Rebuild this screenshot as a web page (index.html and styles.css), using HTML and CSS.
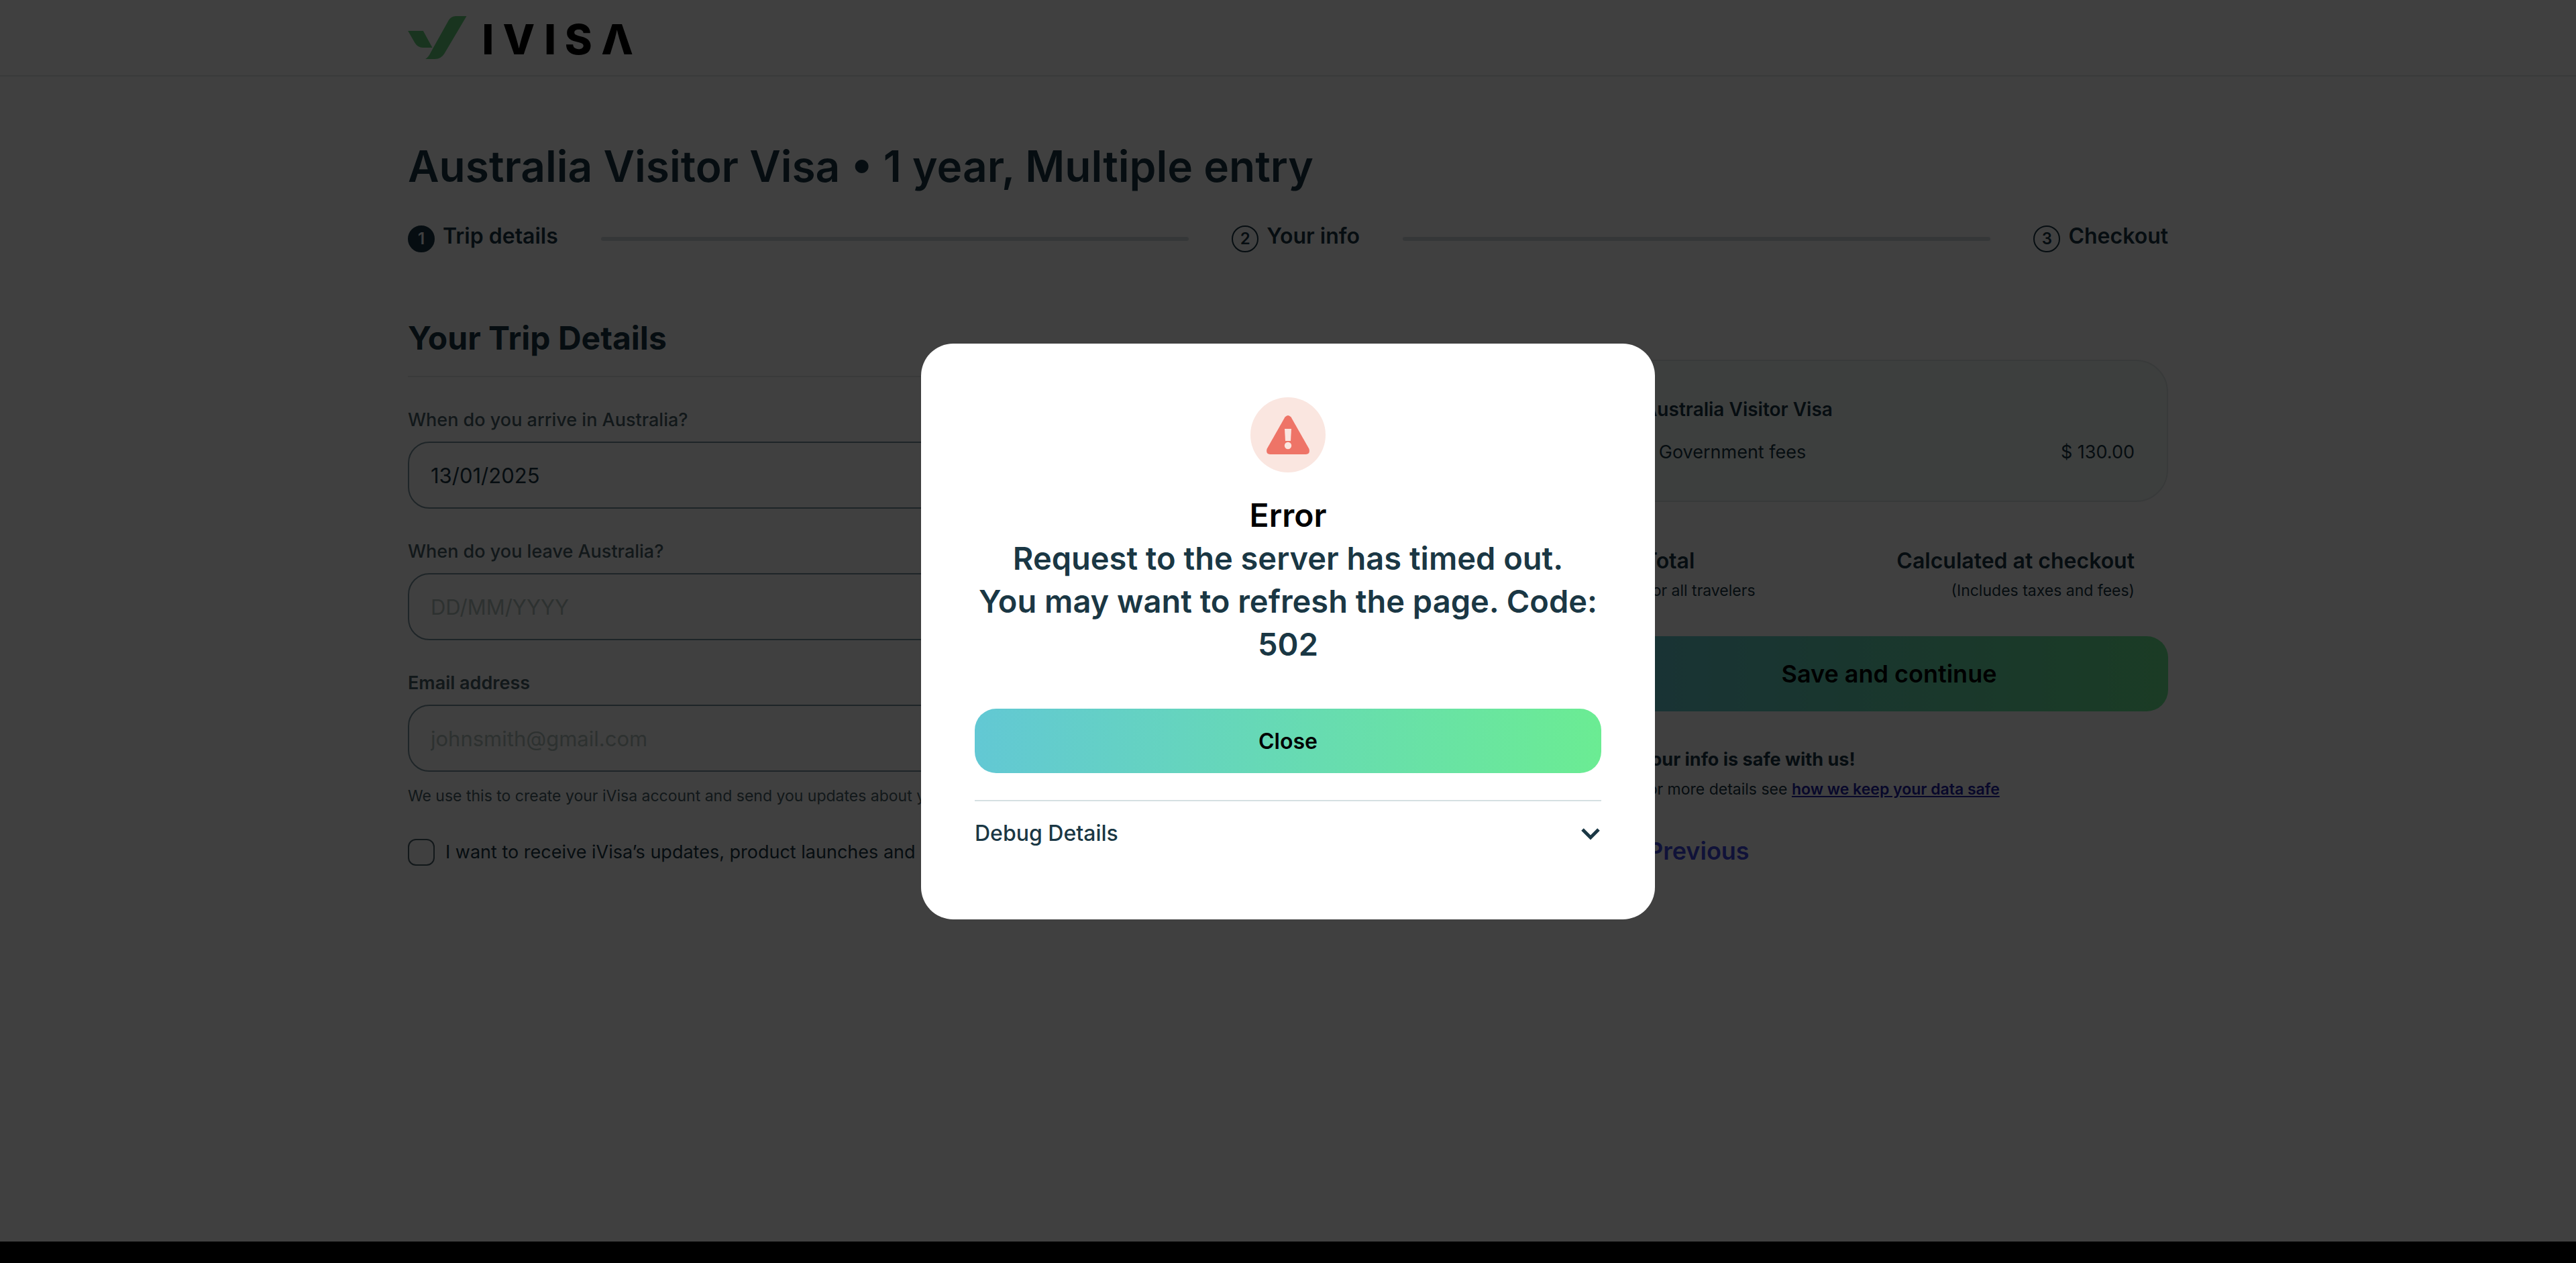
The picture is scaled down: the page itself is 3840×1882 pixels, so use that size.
FILE: index.html
```html
<!DOCTYPE html>
<html lang="en">
<head>
<meta charset="utf-8">
<meta name="viewport" content="width=device-width, initial-scale=1">
<title>Australia Visitor Visa</title>
<link rel="stylesheet" href="styles.css">
</head>
<body>
<div class="page">
  <header class="site-header">
    <div class="container">
      <a class="logo" href="#" aria-label="iVisa home">
        <svg class="logo-mark" viewBox="84 72 1016 192" aria-hidden="true">
          <path fill="#64d07c" d="M84 138H152L193 213H150Q128 213 115 192ZM346 72H298Q276 73 265 92L187 232Q176 256 162 264H204Q233 263 247 239Z"/>
          <text class="logo-word" y="242" x="415 508 693 785 948">IVISΛ</text>
        </svg>
      </a>
    </div>
  </header>

  <main class="container main">
    <h1 class="page-title">Australia Visitor Visa • 1 year, Multiple entry</h1>
    <ol class="steps">
      <li class="step"><span class="step-dot step-dot-active">1</span><span class="step-name">Trip details</span></li>
      <li class="step-line" aria-hidden="true"></li>
      <li class="step"><span class="step-dot">2</span><span class="step-name">Your info</span></li>
      <li class="step-line" aria-hidden="true"></li>
      <li class="step"><span class="step-dot">3</span><span class="step-name">Checkout</span></li>
    </ol>

    <form class="columns">
      <section class="trip">
        <h2 class="section-title">Your Trip Details</h2>
        <div class="field">
          <label class="label" for="arrival">When do you arrive in Australia?</label>
          <input class="input" id="arrival" type="text" value="13/01/2025" placeholder="DD/MM/YYYY">
        </div>
        <div class="field">
          <label class="label" for="departure">When do you leave Australia?</label>
          <input class="input" id="departure" type="text" placeholder="DD/MM/YYYY">
        </div>
        <div class="field">
          <label class="label label-strong" for="email">Email address</label>
          <input class="input" id="email" type="email" placeholder="johnsmith@gmail.com">
        </div>
        <p class="hint">We use this to create your iVisa account and send you updates about your application.</p>
        <label class="consent"><input class="checkbox" type="checkbox">I want to receive iVisa’s updates, product launches and personalized offers.</label>
      </section>

      <aside class="summary">
        <div class="card">
          <p class="card-title">Australia Visitor Visa</p>
          <div class="card-row"><span>• Government fees</span><span>$ 130.00</span></div>
        </div>
        <div class="totals">
          <div><p class="total">Total</p><p class="small">For all travelers</p></div>
          <div class="totals-end"><p class="total">Calculated at checkout</p><p class="small">(Includes taxes and fees)</p></div>
        </div>
        <button class="button button-save" type="button">Save and continue</button>
        <div class="safe">
          <p class="safe-title">Your info is safe with us!</p>
          <p class="small">For more details see <a class="link" href="#">how we keep your data safe</a></p>
        </div>
        <button class="previous" type="button">Previous</button>
      </aside>
    </form>
  </main>
  <footer class="site-footer"></footer>
</div>

<div class="overlay">
  <div class="modal" role="alertdialog" aria-modal="true" aria-labelledby="error-title" aria-describedby="error-text">
    <svg class="alert-icon" viewBox="0 0 112 112" aria-hidden="true">
      <circle cx="56" cy="56" r="56" fill="#fae6e0"/>
      <path fill="#ee7467" d="M51.500 29.500Q56 24.500 60.500 29.500L87.500 77Q89.500 84 83 85H29Q22.500 84 24.500 77Z"/>
      <path fill="#fae6e0" d="M51 47H61L60 65H52Z"/>
      <circle cx="56" cy="72" r="5.200" fill="#fae6e0"/>
    </svg>
    <h2 class="modal-title" id="error-title">Error</h2>
    <p class="modal-text" id="error-text">Request to the server has timed out.<br>You may want to refresh the page. Code: 502</p>
    <button class="button button-close" type="button">Close</button>
    <button class="debug" type="button" aria-expanded="false">Debug Details
      <svg class="chevron" viewBox="0 0 32 32" aria-hidden="true"><path d="M4 10L16 22L28 10" fill="none" stroke="#1a3744" stroke-width="5"/></svg>
    </button>
  </div>
</div>
</body>
</html>
```
FILE: styles.css
```css
* {
  box-sizing: border-box;
}

body,
h1,
h2,
p,
ol {
  margin: 0;
  padding: 0;
}

body,
button,
input {
  font-family: Inter, "Liberation Sans", sans-serif;
}

body {
  background: #fff;
  color: #1a3744;
  font-size: 28px;
  line-height: 40px;
}

button {
  border: 0;
  cursor: pointer;
}

.page {
  display: flex;
  flex-direction: column;
  min-height: 100vh;
}

.container {
  width: 100%;
  max-width: 2688px;
  margin: 0 auto;
  padding: 0 32px;
}

.site-header {
  border-bottom: 2px solid #e4e8e8;
}

.logo {
  display: flex;
  align-items: center;
  height: 112px;
}

.logo-mark {
  width: 339px;
  height: 64px;
  overflow: visible;
}

.logo-word {
  font-size: 186px;
  font-weight: 800;
  fill: #000;
}

.main {
  flex: 1;
  padding-top: 94px;
  padding-bottom: 96px;
}

.page-title {
  font-size: 64px;
  font-weight: 600;
  line-height: 80px;
}

.steps {
  display: flex;
  align-items: center;
  gap: 64px;
  margin-top: 48px;
  list-style: none;
}

.step {
  display: flex;
  gap: 12px;
  font-size: 32px;
  font-weight: 600;
}

.step-dot {
  width: 40px;
  height: 40px;
  border: 2px solid #1a3744;
  border-radius: 50%;
  font-size: 24px;
  line-height: 36px;
  text-align: center;
}

.step-dot-active {
  background: #1a3744;
  color: #fff;
}

.step-name {
  line-height: 32px;
}

.step-line {
  flex: 1;
  height: 6px;
  border-radius: 3px;
  background: #d3dade;
}

.columns {
  display: grid;
  grid-template-columns: 2fr 1fr;
  gap: 128px;
  margin-top: 96px;
}

.section-title {
  padding-bottom: 24px;
  border-bottom: 2px solid #e4e8e8;
  font-size: 48px;
  font-weight: 700;
  line-height: 64px;
}

.field {
  margin-top: 44px;
}

.label {
  display: block;
  margin-bottom: 12px;
  color: #4a5f6a;
  font-size: 27px;
  font-weight: 500;
}

.label-strong {
  font-weight: 600;
}

.input {
  display: block;
  width: 100%;
  height: 100px;
  padding: 0 32px;
  border: 2px solid #7a939e;
  border-radius: 32px;
  background: #fff;
  color: #1a3744;
  font-size: 31px;
}

.input::placeholder {
  color: #b2c2be;
  opacity: 1;
}

.hint {
  margin-top: 16px;
  color: #4a5f6a;
  font-size: 23px;
}

.consent {
  display: flex;
  align-items: center;
  gap: 16px;
  margin-top: 44px;
  font-size: 27px;
}

.checkbox {
  width: 40px;
  height: 40px;
  margin: 0;
  border: 2px solid #4a5f6a;
  border-radius: 12px;
  appearance: none;
}

.summary {
  padding-top: 64px;
}

.card {
  padding: 52px 48px;
  border: 2px solid #dfe6e6;
  border-radius: 48px;
  background: #f3f9f7;
}

.card-title {
  font-size: 28px;
  font-weight: 600;
}

.card-row {
  display: flex;
  justify-content: space-between;
  margin-top: 24px;
  font-size: 27px;
}

.totals {
  display: flex;
  justify-content: space-between;
  padding: 64px 50px 0;
}

.totals-end {
  text-align: right;
}

.total {
  font-size: 32px;
  font-weight: 600;
  line-height: 48px;
}

.small {
  font-size: 23px;
}

.button {
  display: block;
  width: 100%;
  border-radius: 32px;
  background: linear-gradient(90deg, #62c8d4, #6bec93);
  color: #000;
  font-weight: 600;
}

.button-save {
  height: 112px;
  margin-top: 48px;
  font-size: 36px;
}

.safe {
  margin-top: 52px;
  padding-left: 44px;
}

.safe-title {
  margin-bottom: 4px;
  font-size: 27px;
  font-weight: 700;
}

.link {
  color: #2020a8;
  font-weight: 600;
}

.previous {
  display: block;
  margin-top: 48px;
  padding: 0 0 0 56px;
  background: none;
  color: #4048e0;
  font-size: 36px;
  font-weight: 600;
  line-height: 48px;
}

.site-footer {
  height: 32px;
  background: #000;
}

.overlay {
  position: fixed;
  inset: 0;
  display: flex;
  align-items: center;
  justify-content: center;
  background: rgba(0, 0, 0, .75);
}

.modal {
  width: 100%;
  max-width: 1094px;
  padding: 80px;
  border-radius: 48px;
  background: #fff;
  text-align: center;
}

.alert-icon {
  display: block;
  width: 112px;
  height: 112px;
  margin: 0 auto 32px;
}

.modal-title,
.modal-text {
  font-weight: 600;
  line-height: 64px;
}

.modal-title {
  color: #000;
  font-size: 48px;
}

.modal-text {
  font-size: 47px;
}

.button-close {
  height: 96px;
  margin: 64px 0 40px;
  font-size: 32px;
}

.debug {
  display: flex;
  align-items: center;
  justify-content: space-between;
  width: 100%;
  padding: 24px 0;
  border-top: 2px solid #d5e0e2;
  background: none;
  color: #1a3744;
  font-size: 32px;
  font-weight: 500;
  line-height: 48px;
}

.chevron {
  width: 32px;
  height: 32px;
}
```
